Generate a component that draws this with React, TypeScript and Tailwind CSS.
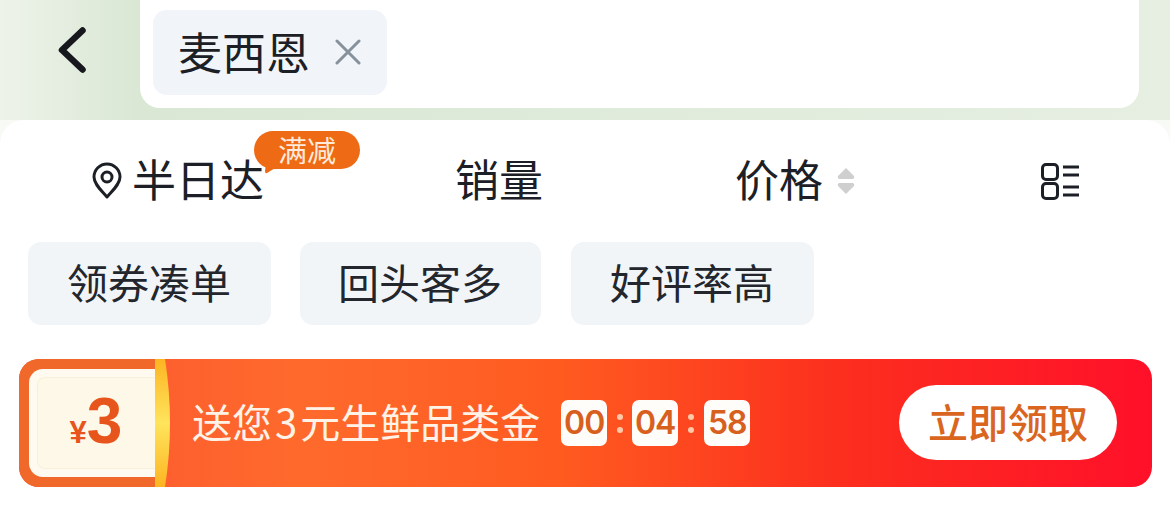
import React from 'react';

const cjk = { fontFamily: '"Noto Sans CJK SC", "Noto Sans", sans-serif' };

const tags = [
  { label: '领券凑单', width: 'w-[243px]' },
  { label: '回头客多', width: 'w-[241px]' },
  { label: '好评率高', width: 'ml-px w-[243px]' },
];

const TimeBox: React.FC<{ value: string }> = ({ value }) => (
  <div className="flex h-[46px] w-[46px] items-center justify-center rounded-[7px] bg-[#fffdf9] font-['Inter'] text-[32px] font-semibold tracking-[-1px] text-[#d8601f]">
    {value}
  </div>
);

const Colon: React.FC<{ className?: string }> = ({ className = 'w-[25px]' }) => (
  <div className={`${className} flex flex-col items-center gap-[7px]`}>
    <span className="h-[6px] w-[6px] rounded-full bg-[#ffc9a8]" />
    <span className="h-[6px] w-[6px] rounded-full bg-[#ffc9a8]" />
  </div>
);

const App: React.FC = () => {
  return (
    <div className="flex h-[514px] w-[1170px] flex-col overflow-hidden bg-[#f7faf5]" style={cjk}>
      {/* top search bar */}
      <div className="flex h-[120px] shrink-0 items-start bg-gradient-to-r from-[#eef3ea] via-[#d9e7d4] via-[12%] to-[#e6efe2] pl-[52px]">
        <svg width="40" height="56" viewBox="0 0 40 56" className="mt-[22px] shrink-0">
          <path d="M30.5 8.5 L10 28 L30.5 47.5" fill="none" stroke="#16181d" strokeWidth="6.5" strokeLinecap="round" strokeLinejoin="round" />
        </svg>
        <div className="ml-[48px] flex h-[108px] w-[999px] items-start rounded-b-[20px] bg-white pl-[13px] pt-[10px]">
          <div className="flex h-[85px] w-[234px] items-center rounded-[14px] bg-[#f1f4f8] pl-[25px]">
            <span className="-mt-[4px] text-[44px] leading-none text-[#1c2026]">麦西恩</span>
            <svg width="26" height="26" viewBox="0 0 26 26" className="-mt-[2px] ml-[25px]">
              <path d="M2 2 L24 24 M24 2 L2 24" stroke="#87919c" strokeWidth="3" strokeLinecap="round" />
            </svg>
          </div>
        </div>
      </div>

      {/* results panel */}
      <div className="flex-1 rounded-t-[24px] bg-white">
        {/* sort row */}
        <div className="flex h-[122px] items-center pl-[92px] text-[44px] leading-none text-[#1c2026]">
          <svg width="30" height="38" viewBox="0 0 30 38" className="shrink-0">
            <path d="M15 35 C9 28 2 22 2 15 A13 13 0 0 1 28 15 C28 22 21 28 15 35 Z" fill="none" stroke="#1c2026" strokeWidth="3" strokeLinejoin="round" />
            <circle cx="15" cy="15" r="5" fill="none" stroke="#1c2026" strokeWidth="3" />
          </svg>
          <div className="relative -mt-[6px] ml-[10px]">
            <span>半日达</span>
            <div className="absolute left-[122px] top-[-25px] flex h-[38px] w-[106px] items-center justify-center rounded-[19px] bg-[#ee6a14] text-[29px] leading-none text-[#ffeadb]">
              <span className="-mt-[2px]">满减</span>
              <svg width="18" height="10" viewBox="0 0 18 10" className="absolute bottom-[-5px] left-[10px]">
                <path d="M2 0 H18 L3 9 Q1 10 1 7 Z" fill="#ee6a14" />
              </svg>
            </div>
          </div>
          <span className="-mt-[6px] ml-[191px]">销量</span>
          <span className="-mt-[6px] ml-[192px]">价格</span>
          <svg width="18" height="28" viewBox="0 0 18 28" className="ml-[14px] shrink-0">
            <path d="M9 1 L17 9 Q18 12 15 12 L3 12 Q0 12 1 9 Z" fill="#cfcfcf" />
            <path d="M9 27 L17 19 Q18 16 15 16 L3 16 Q0 16 1 19 Z" fill="#cfcfcf" />
          </svg>
          <svg width="38" height="37" viewBox="0 0 38 37" className="ml-[186px] shrink-0">
            <rect x="1.5" y="1.5" width="15" height="15" rx="3.5" fill="none" stroke="#1c2026" strokeWidth="3" />
            <rect x="1.5" y="20.5" width="15" height="15" rx="3.5" fill="none" stroke="#1c2026" strokeWidth="3" />
            <path d="M22 4 H38 M22 12 H38 M22 24 H38 M22 32 H38" stroke="#1c2026" strokeWidth="3" />
          </svg>
        </div>

        {/* filter tags */}
        <div className="flex gap-[29px] pl-[28px]">
          {tags.map((tag) => (
            <div key={tag.label} className={`${tag.width} flex h-[83px] items-center justify-center rounded-[13px] bg-[#f2f5f8] pb-[4px] pr-px text-[41px] leading-none text-[#23272d]`}>
              {tag.label}
            </div>
          ))}
        </div>

        {/* coupon banner */}
        <div className="mx-[19px] mt-[34px] flex h-[128px] w-[1133px] items-center overflow-hidden rounded-[20px] bg-[linear-gradient(90deg,#fb5530_0%,#ff6a2c_25%,#ff5a20_48%,#fc2f1e_72%,#ff1029_100%)]">
          <div className="flex h-full w-[136px] shrink-0 bg-[#f0682a] py-[10px] pl-[10px]">
            <div className="flex h-full w-full rounded-l-[14px] bg-[#fffaf0] py-[8px] pl-[8px]">
              <div className="flex h-full w-full items-baseline justify-center rounded-l-[8px] border border-r-0 border-[#f7f0da] bg-[#fef8e8] pr-[3px] pt-[11px] font-['Liberation_Sans'] font-bold leading-none text-[#e8551c]">
                <span className="text-[31px]">¥</span>
                <span className="text-[64px] tracking-[-2px]">3</span>
              </div>
            </div>
          </div>
          <svg width="16" height="128" viewBox="0 0 16 128" className="shrink-0">
            <defs>
              <linearGradient id="edge" x1="0" y1="0" x2="0" y2="1">
                <stop offset="0" stopColor="#fdb422" />
                <stop offset="0.5" stopColor="#ffe45c" />
                <stop offset="1" stopColor="#fdb422" />
              </linearGradient>
            </defs>
            <path d="M0 0 H10 Q20 64 10 128 H0 Z" fill="url(#edge)" />
          </svg>
          <span className="-mt-[5px] ml-[21px] whitespace-nowrap text-[40px] leading-none text-[#fff3e8]">
            送您<span className="mx-[3px]">3</span>元生鲜品类金
          </span>
          <div className="ml-[21px] flex items-center">
            <TimeBox value="00" />
            <Colon />
            <TimeBox value="04" />
            <Colon className="w-[26px]" />
            <TimeBox value="58" />
          </div>
          <div className="mb-[1px] ml-auto mr-[35px] flex h-[75px] w-[218px] items-center justify-center rounded-full bg-white pb-[4px] text-[40px] font-medium leading-none text-[#d9651f]">
            立即领取
          </div>
        </div>
      </div>
    </div>
  );
};

export default App;
